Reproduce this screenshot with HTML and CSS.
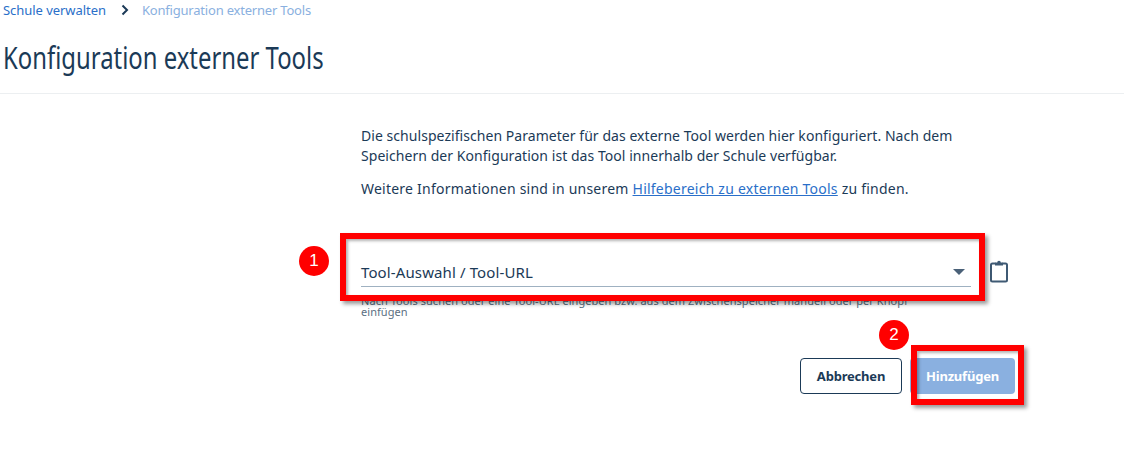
FILE: index.html
```html
<!DOCTYPE html>
<html lang="de">
<head>
<meta charset="utf-8">
<title>Konfiguration externer Tools</title>
<link rel="stylesheet" href="styles.css">
</head>
<body>
<header class="page-header">
  <nav class="breadcrumb">
    <a class="crumb-link" href="#">Schule verwalten</a>
    <svg class="crumb-sep" width="8" height="12" viewBox="0 0 8 12"><path d="M1.500 1.500 6 6l-4.500 4.500" fill="none" stroke="#1b3a57" stroke-width="2"/></svg>
    <span class="crumb-current">Konfiguration externer Tools</span>
  </nav>
  <h1 class="title">Konfiguration externer Tools</h1>
</header>
<main class="content">
  <p class="intro">Die schulspezifischen Parameter für das externe Tool werden hier konfiguriert. Nach dem Speichern der Konfiguration ist das Tool innerhalb der Schule verfügbar.</p>
  <p class="intro second">Weitere Informationen sind in unserem <a href="#" class="help-link">Hilfebereich zu externen Tools</a> zu finden.</p>
  <div class="field-row">
    <div class="select">
      <span>Tool-Auswahl / Tool-URL</span>
      <svg class="arrow" width="12" height="6" viewBox="0 0 12 6"><path d="M0 0h12L6 6z" fill="#4a6178"/></svg>
    </div>
    <svg class="clip" width="24" height="24" viewBox="0 0 24 24"><path d="M8.500 4.500H5.500a1.500 1.500 0 0 0-1.500 1.500v15a1.500 1.500 0 0 0 1.500 1.500h13a1.500 1.500 0 0 0 1.500-1.500V6a1.500 1.500 0 0 0-1.500-1.500h-3" fill="none" stroke="#3f5a74" stroke-width="2"/><path d="M8 6.500V3.500h2.200a1.800 1.800 0 0 1 3.600 0H16v3z" fill="#3f5a74"/></svg>
  </div>
  <p class="hint">Nach Tools suchen oder eine Tool-URL eingeben bzw. aus dem Zwischenspeicher manuell oder per Knopf einfügen</p>
  <div class="actions">
    <button class="btn btn-outline" type="button">Abbrechen</button>
    <button class="btn btn-primary" type="button">Hinzufügen</button>
  </div>
</main>
<div class="mark mark-field"></div>
<div class="mark mark-button"></div>
<div class="badge badge-one">1</div>
<div class="badge badge-two">2</div>
</body>
</html>
```
FILE: styles.css
```css
html, body { margin: 0; padding: 0; }
body {
  width: 1124px;
  height: 457px;
  overflow: hidden;
  position: relative;
  background: #fff;
  color: #1b3a57;
  font-family: "Noto Sans", "Lato", sans-serif;
}
.page-header {
  height: 93px;
  padding: 0 0 0 3px;
  border-bottom: 1px solid #eceff1;
}
.breadcrumb {
  display: flex;
  align-items: center;
  gap: 14px;
  height: 20px;
  font-size: 13px;
}
.crumb-link { color: #2a6fc9; text-decoration: none; letter-spacing: -.05px; }
.crumb-current { color: #8ab0e0; letter-spacing: -.2px; margin-left: -1px; }
.crumb-sep { margin-left: 1px; }
.title {
  margin: 16px 0 0;
  font-family: "Noto Sans", sans-serif;
  font-weight: 400;
  font-size: 31px;
  line-height: 42px;
  white-space: nowrap;
  transform: scaleX(.77);
  transform-origin: left center;
}
.content {
  width: 654px;
  margin-left: 361px;
  padding-top: 32px;
}
.intro {
  margin: 0;
  width: 610px;
  font-size: 14px;
  line-height: 20px;
  letter-spacing: .05px;
}
.second { margin-top: 13px; letter-spacing: .23px; }
.help-link { color: #2a6fc9; }
.field-row {
  display: flex;
  align-items: center;
  gap: 16px;
  margin-top: 60px;
}
.select {
  width: 610px;
  height: 28px;
  box-sizing: border-box;
  border-bottom: 1px solid #9fb1c1;
  display: flex;
  align-items: center;
  justify-content: space-between;
  padding: 0 6px 2px 0;
  font-size: 15px;
  letter-spacing: .12px;
}
.clip { margin-top: -5px; }
.hint {
  margin: 8px 0 0;
  width: 580px;
  font-size: 11px;
  line-height: 11px;
  letter-spacing: .05px;
  color: #5b6f82;
}
.actions {
  display: flex;
  justify-content: flex-end;
  gap: 8px;
  margin-top: 41px;
}
.btn {
  height: 36px;
  border-radius: 4px;
  font-family: inherit;
  font-size: 13px;
  font-weight: 700;
  letter-spacing: -.2px;
  padding: 0;
}
.btn-outline { width: 102px; background: #fff; color: #1b3a57; border: 1px solid #1b3a57; }
.btn-primary { width: 105px; background: #8ab0e0; color: #fff; border: 0; }
.mark {
  position: absolute;
  box-sizing: border-box;
  border: 6px solid #ff0000;
  box-shadow: 3px 3px 4px rgba(0,0,0,.4), inset 2px 2px 3px rgba(0,0,0,.3);
}
.mark-field { left: 340px; top: 233px; width: 645px; height: 68px; }
.mark-button { left: 911px; top: 345px; width: 113px; height: 60px; }
.badge {
  position: absolute;
  width: 30px;
  height: 30px;
  border-radius: 50%;
  background: #ff0000;
  color: #fff;
  font-family: "Liberation Sans", sans-serif;
  font-size: 17px;
  line-height: 30px;
  text-align: center;
}
.badge-one { left: 299px; top: 246px; }
.badge-two { left: 879px; top: 320px; }
```
